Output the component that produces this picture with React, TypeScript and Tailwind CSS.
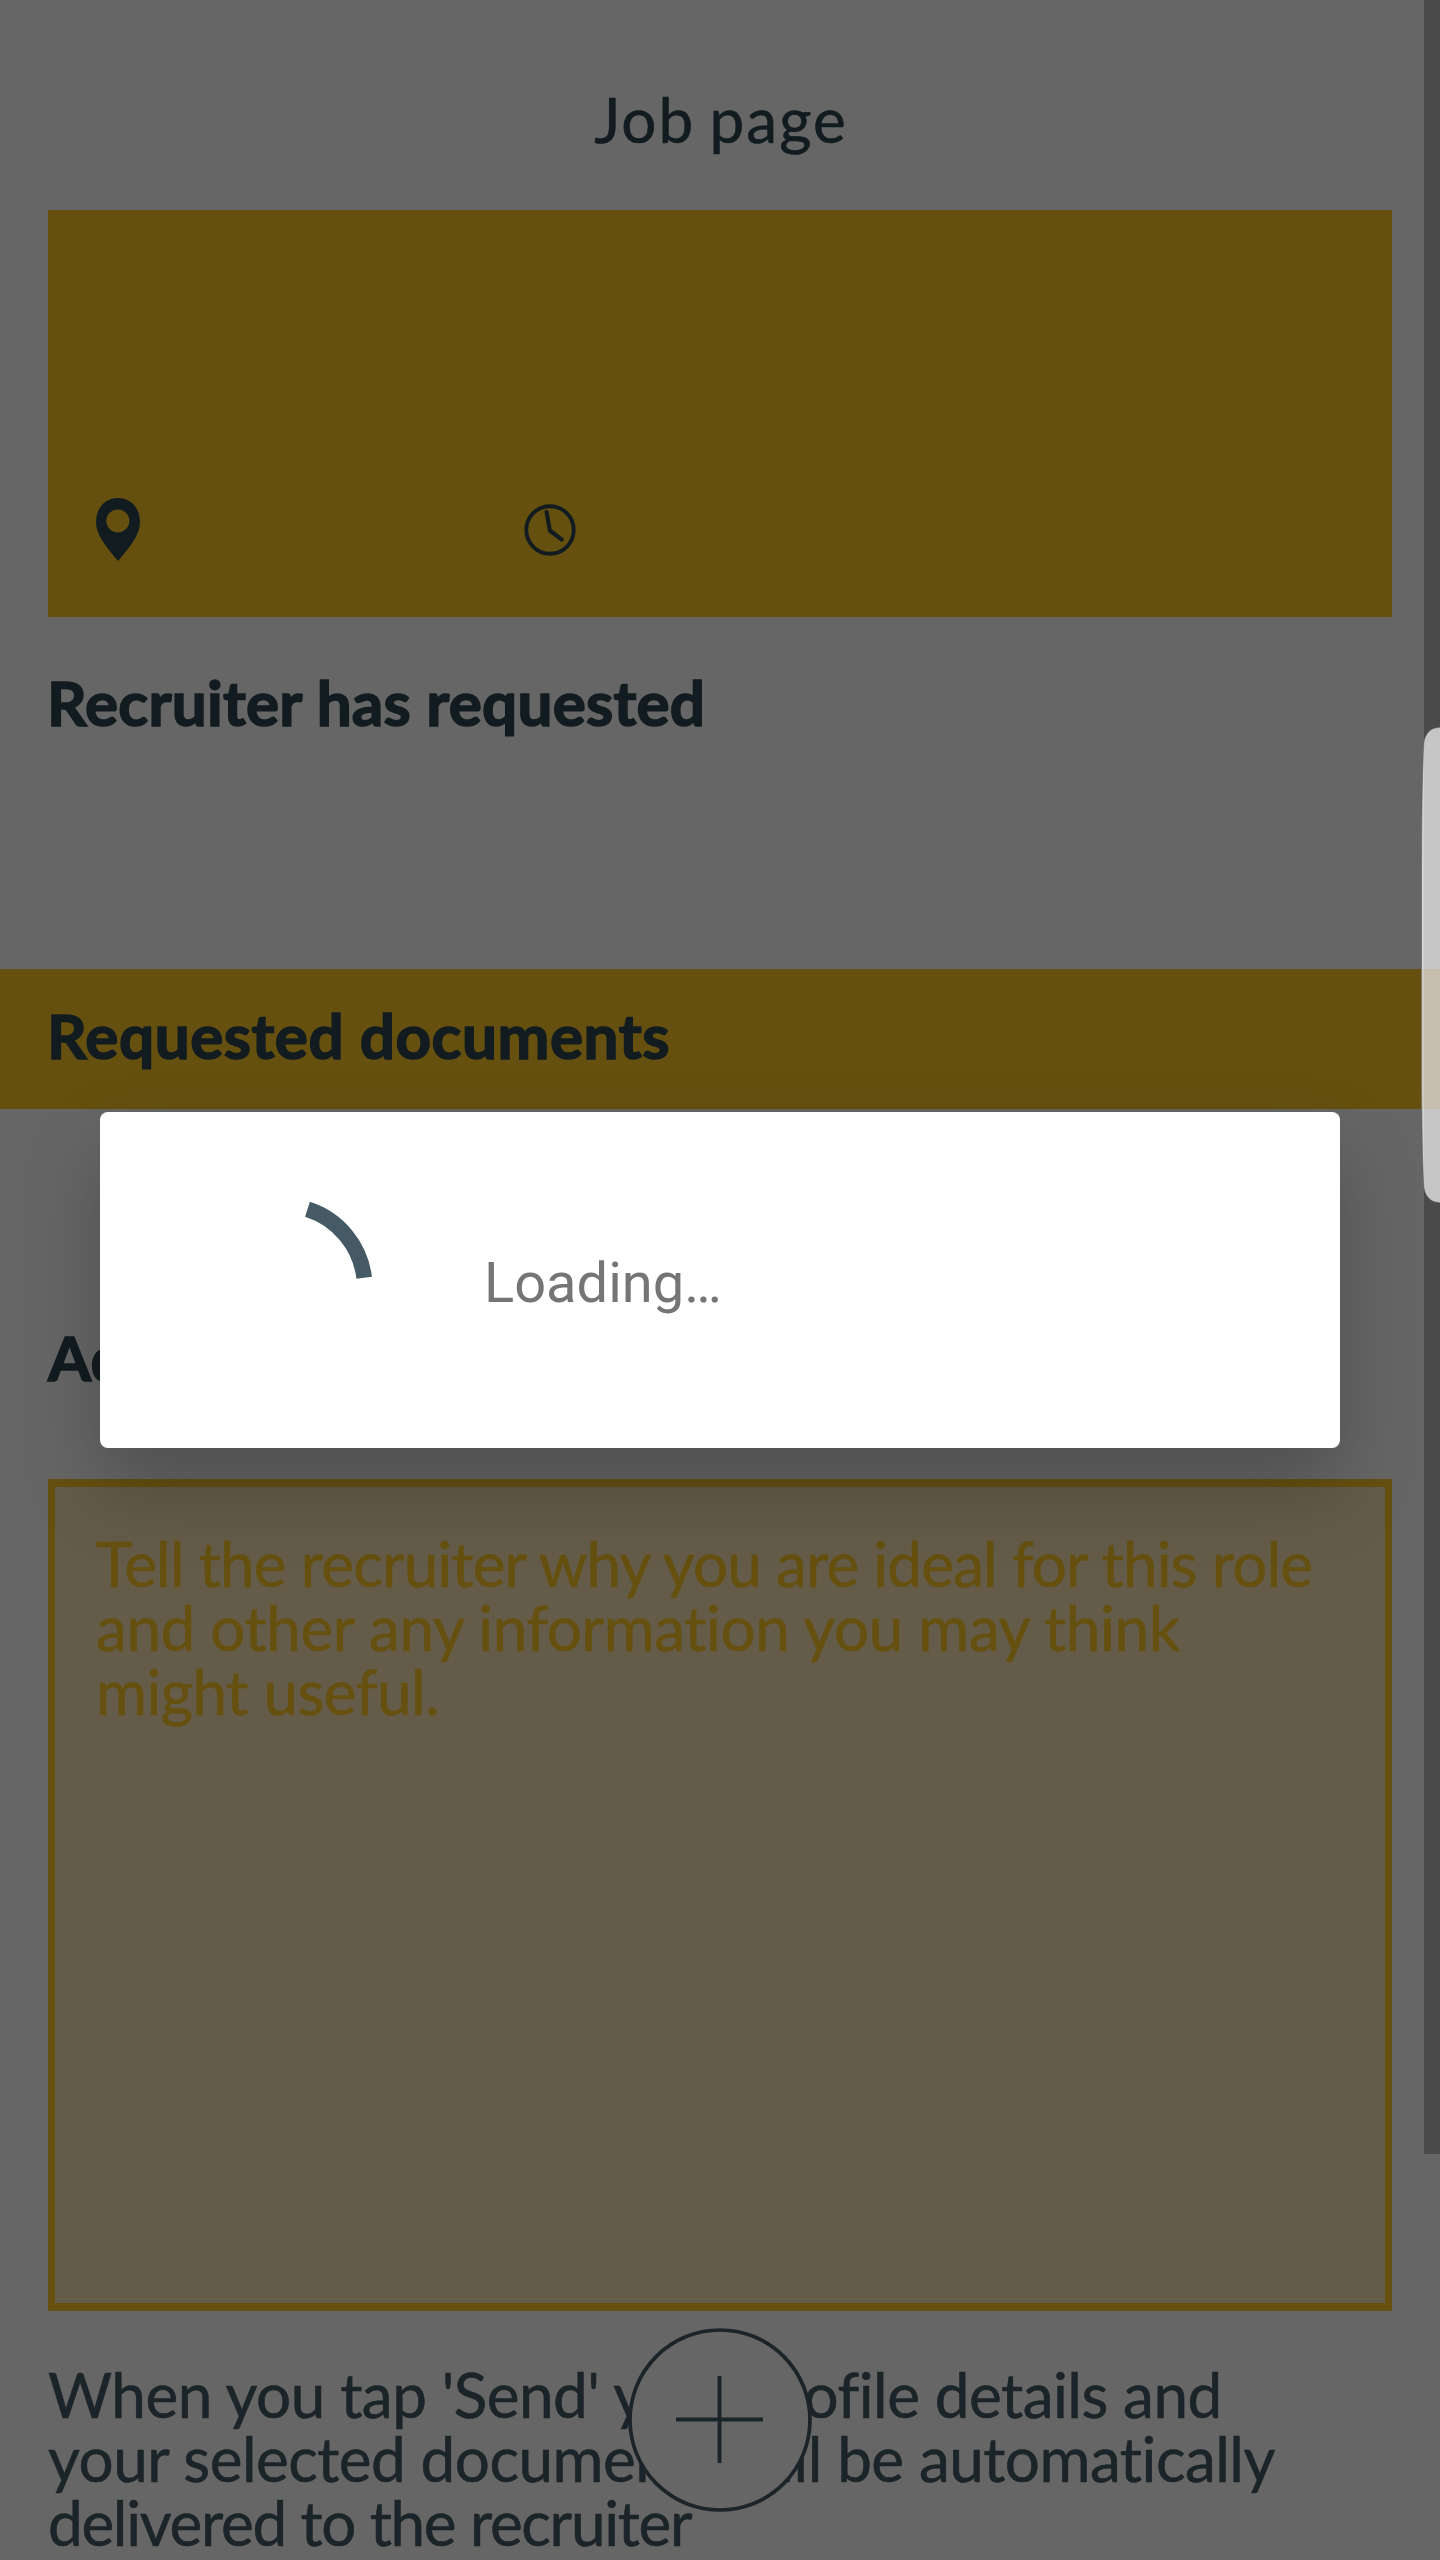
const LATO = "font-[Lato,sans-serif] text-[62px] leading-[64px] whitespace-nowrap";
const REGULAR = "[-webkit-text-stroke:0.6px_currentColor]";
const HEADING = "font-bold [-webkit-text-stroke:1.6px_currentColor]";

function PinIcon() {
  return (
    <svg className="h-[63px] w-[46px]" viewBox="0 0 46 63" fill="#2f4850">
      <path
        fillRule="evenodd"
        d="M23 0C9.5 0 1 10.600 1 24c0 5.500 1.800 10.500 4.700 16C10 47.500 16 55 23 63c7-8 13-15.500 17.300-23 2.900-5.500 4.700-10.500 4.700-16C45 10.600 36.500 0 23 0Zm-.2 11.400a11.500 11.500 0 1 1 0 23 11.500 11.500 0 0 1 0-23Z"
      />
    </svg>
  );
}

function ClockIcon() {
  return (
    <svg className="size-[52px]" viewBox="0 0 52 52" fill="none" stroke="#2f4850" strokeLinecap="round" strokeLinejoin="round">
      <circle cx="26" cy="26" r="23.700" strokeWidth="3.900" />
      <path d="M22.600 8L25.800 26.500L37.800 35.600" strokeWidth="4.200" />
    </svg>
  );
}

function PlusButton() {
  return (
    <button className="absolute left-[628px] top-[2328px] size-[184px]" aria-label="Add">
      <svg className="size-full" viewBox="0 0 184 184" fill="white" stroke="#455a64">
        <circle cx="92" cy="92" r="90" strokeWidth="3.700" />
        <path d="M48 91.500H135M91.500 48V135" strokeWidth="3.900" />
      </svg>
    </button>
  );
}

function EdgeHandle() {
  return (
    <svg className="absolute right-0 top-[727px] h-[476px] w-[20px]" viewBox="0 0 20 476">
      <defs>
        <clipPath id="handle">
          <path d="M20 .5H19C10 .5 4.500 8 3.800 16C2.300 40 1.500 90 1.500 150V326C1.500 386 2.300 436 3.800 460C4.500 468 10 475.500 19 475.500H20Z" />
        </clipPath>
      </defs>
      <g clipPath="url(#handle)">
        <rect width="20" height="476" fill="#c6c6c6" />
        <rect y="242" width="20" height="140" fill="#c7beb0" />
        <rect width="4" height="476" fill="#ffffff" opacity=".2" />
      </g>
      <path
        d="M19 .5C10 .5 4.500 8 3.800 16C2.300 40 1.500 90 1.500 150V326C1.500 386 2.300 436 3.800 460C4.500 468 10 475.500 19 475.500"
        fill="none"
        stroke="#505050"
        strokeOpacity=".55"
      />
    </svg>
  );
}

function LoadingDialog() {
  return (
    <div className="absolute left-[100px] top-[1112px] flex h-[336px] w-[1240px] items-start rounded-lg bg-white pl-[84px] pt-[72px] shadow-[0_40px_80px_rgba(0,0,0,0.22)]">
      <svg className="size-[192px]" viewBox="0 0 192 192" fill="none">
        <path d="M123.500 25.200A82.300 82.300 0 0 1 180.200 93.800" stroke="#455a64" strokeWidth="15.600" />
      </svg>
      <p className="ml-[108px] mt-[66px] font-[Roboto,sans-serif] text-[56px] leading-[66px] text-[#757575]">Loading…</p>
    </div>
  );
}

export default function App() {
  return (
    <div className="relative h-[2560px] w-[1440px] overflow-hidden bg-white">
      <main className="flex flex-col text-[#2f4850]">
        <header className="flex h-[210px] justify-center pl-0.5 pt-[87px]">
          <h1 className={`${LATO} ${REGULAR} tracking-[2.100px] [word-spacing:-4px]`}>Job page</h1>
        </header>

        <section className="mx-12 flex h-[407px] items-start bg-[#fcc828] px-[47px] pt-[288px]">
          <PinIcon />
          <div className="ml-[383px] mt-[6px]">
            <ClockIcon />
          </div>
        </section>

        <section className="h-[352px] pl-[47px] pt-[53px]">
          <h2 className={`${LATO} ${HEADING} tracking-[0.220px]`}>Recruiter has requested</h2>
        </section>

        <section className="h-[140px] bg-[#fcc828] pl-[47px] pt-[34px]">
          <h2 className={`${LATO} ${HEADING} tracking-[0.520px]`}>Requested documents</h2>
        </section>

        <section className="h-[370px] pl-12 pt-[216px]">
          <h2 className={`${LATO} ${HEADING}`}>Additional information</h2>
        </section>

        <section className={`${LATO} ${REGULAR} mx-12 h-[832px] border-x-[7px] border-y-8 border-[#fcc828] bg-[#fae6b4] pl-[41px] pt-[44px] text-[#fcc828]`}>
          <p className="tracking-[-0.840px]">Tell the recruiter why you are ideal for this role</p>
          <p className="tracking-[-0.420px]">and other any information you may think</p>
          <p className="tracking-[-0.500px]">might useful.</p>
        </section>

        <section className={`${LATO} ${REGULAR} pl-12 pt-[51px] text-[#455a64]`}>
          <p className="tracking-[-0.520px]">When you tap 'Send' your profile details and</p>
          <p className="tracking-[-0.520px]">your selected documents will be automatically</p>
          <p className="tracking-[-1.300px]">delivered to the recruiter</p>
        </section>
      </main>

      <div className="absolute right-0 top-0 h-[2154px] w-4 bg-[#b9b9b9]" />
      <PlusButton />
      <div className="absolute inset-0 bg-black/60" />
      <LoadingDialog />
      <EdgeHandle />
    </div>
  );
}
